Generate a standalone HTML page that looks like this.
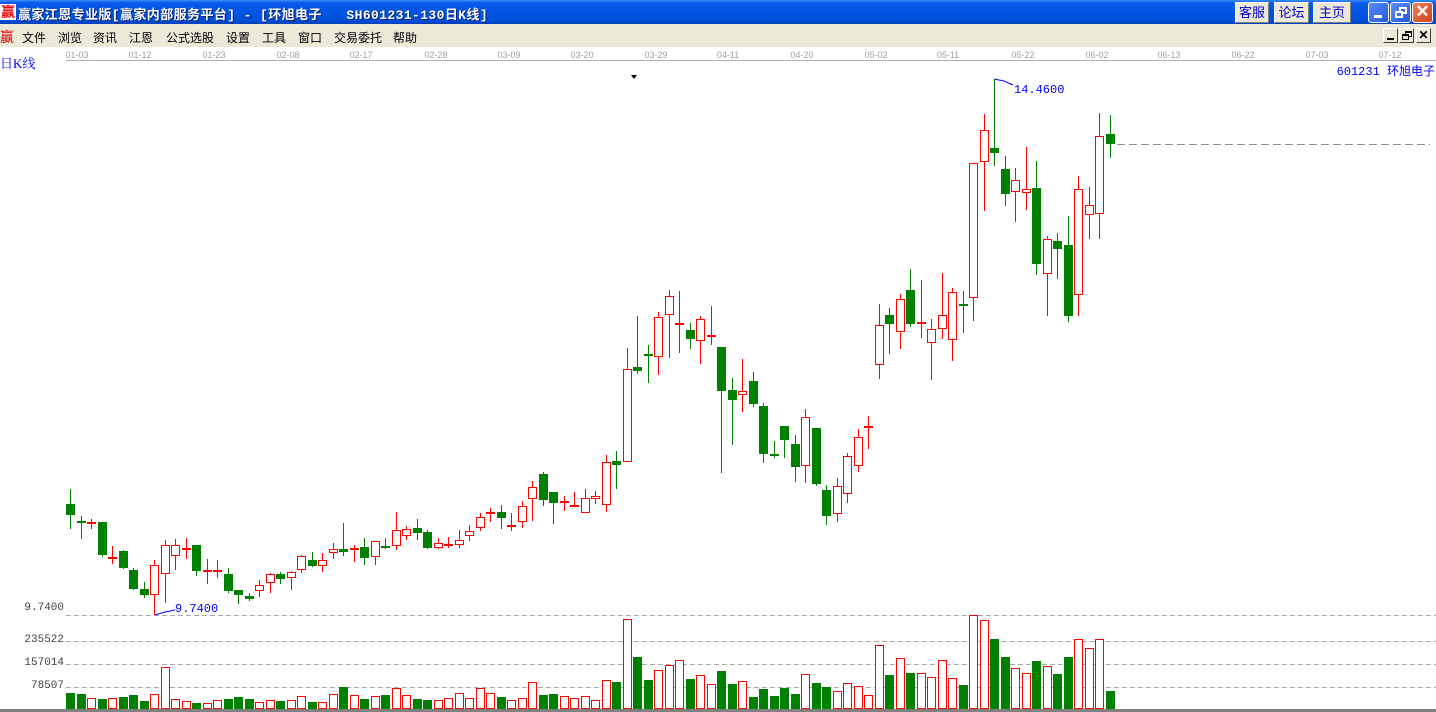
<!DOCTYPE html>
<html><head><meta charset="utf-8">
<style>
*{margin:0;padding:0;box-sizing:border-box}
body{width:1436px;height:712px;overflow:hidden;background:#fff;position:relative;font-family:"Liberation Sans","Noto Sans CJK SC",sans-serif}
#title{position:absolute;left:0;top:0;width:1436px;height:24px;background:linear-gradient(#3d8dfc 0%,#0a5ae8 12%,#0054e3 50%,#0050dc 85%,#003fb8 100%)}
#title .t{position:absolute;left:18px;top:4px;color:#fff;font-weight:bold;font-size:13px;letter-spacing:0.4px;white-space:pre;font-family:"Liberation Mono","WenQuanYi Zen Hei","Noto Sans CJK SC",monospace;text-shadow:1px 1px 0 #0a1e6a}
.ico{position:absolute;color:#e00;font-size:14px;font-weight:bold;background:#fff;line-height:16px;width:16px;height:16px;text-align:center}
.tb{position:absolute;top:2px;height:21px;background:#ece9d8;border:1px solid #fff;border-right-color:#808080;border-bottom-color:#808080;color:#00c;font-size:13px;text-align:center;line-height:19px}
.xb{position:absolute;top:2px;width:21px;height:21px;border:1px solid #fff;border-radius:3px;background:linear-gradient(135deg,#5a8dff,#2159e0);}
#menu{position:absolute;left:0;top:24px;width:1436px;height:23px;background:#ece9d8;font-size:12px;color:#000}
#menu span{position:absolute;top:5px}
.mb{position:absolute;top:4px;width:15px;height:15px;background:#ece9d8;border:1px solid #fff;border-right-color:#404040;border-bottom-color:#404040}
.d{position:absolute;top:50px;font-size:9px;color:#a0a0a0;transform:translateX(-50%);font-family:"Liberation Sans",sans-serif}
.lab{position:absolute;font-size:11px;color:#404040;font-family:"Liberation Mono",monospace;text-align:right;width:60px;left:4px}
</style></head><body>
<div id="title">
<div class="ico" style="left:0;top:4px;background:#fff">赢</div>
<div class="t">赢家江恩专业版[赢家内部服务平台] - [环旭电子   SH601231-130日K线]</div>
<div class="tb" style="left:1235px;width:34px">客服</div>
<div class="tb" style="left:1274px;width:35px">论坛</div>
<div class="tb" style="left:1313px;width:38px">主页</div>
<div class="xb" style="left:1368px"><div style="position:absolute;left:5px;top:12px;width:8px;height:3px;background:#fff"></div></div>
<div class="xb" style="left:1390px"><div style="position:absolute;left:8px;top:4px;width:8px;height:7px;border:2px solid #fff"></div><div style="position:absolute;left:4px;top:8px;width:8px;height:7px;border:2px solid #fff;background:#3a6ef0"></div></div>
<div class="xb" style="left:1412px;background:linear-gradient(135deg,#f08060,#d04020);color:#fff;font-size:17px;line-height:18px;text-align:center;font-weight:bold">✕</div>
</div>
<div id="menu">
<span style="left:0;top:3px;color:#d00;font-size:14px">赢</span>
<span style="left:22px">文件</span><span style="left:58px">浏览</span><span style="left:93px">资讯</span><span style="left:129px">江恩</span><span style="left:166px">公式选股</span><span style="left:226px">设置</span><span style="left:262px">工具</span><span style="left:298px">窗口</span><span style="left:334px">交易委托</span><span style="left:393px">帮助</span>
<div class="mb" style="left:1383px"><div style="position:absolute;left:3px;top:9px;width:7px;height:2px;background:#000"></div></div>
<div class="mb" style="left:1399px"><div style="position:absolute;left:5px;top:2px;width:7px;height:6px;border:1px solid #000;border-top-width:2px"></div><div style="position:absolute;left:2px;top:5px;width:7px;height:6px;border:1px solid #000;border-top-width:2px;background:#ece9d8"></div></div>
<div class="mb" style="left:1416px;font-size:12px;font-weight:bold;text-align:center;line-height:13px">✕</div>
</div>
<div style="position:absolute;left:66px;top:60px;width:1370px;height:1px;background:#b0b0b0"></div>
<div class="d" style="left:77px">01-03</div><div class="d" style="left:140px">01-12</div><div class="d" style="left:214px">01-23</div><div class="d" style="left:288px">02-08</div><div class="d" style="left:361px">02-17</div><div class="d" style="left:436px">02-28</div><div class="d" style="left:509px">03-09</div><div class="d" style="left:582px">03-20</div><div class="d" style="left:656px">03-29</div><div class="d" style="left:728px">04-11</div><div class="d" style="left:802px">04-20</div><div class="d" style="left:876px">05-02</div><div class="d" style="left:948px">05-11</div><div class="d" style="left:1023px">05-22</div><div class="d" style="left:1097px">06-02</div><div class="d" style="left:1169px">06-13</div><div class="d" style="left:1243px">06-22</div><div class="d" style="left:1317px">07-03</div><div class="d" style="left:1390px">07-12</div>
<div style="position:absolute;left:0;top:53px;color:#00f;font-size:13px;font-family:'Liberation Serif','Noto Serif CJK SC',serif">日K线</div>
<div style="position:absolute;right:1px;top:62px;color:#00f;font-size:12px;font-family:'Liberation Mono','Noto Sans CJK SC',monospace">601231 环旭电子</div>
<div style="position:absolute;left:1014px;top:83px;color:#00f;font-size:12px;font-family:'Liberation Mono',monospace">14.4600</div>
<div style="position:absolute;left:175px;top:602px;color:#00f;font-size:12px;font-family:'Liberation Mono',monospace">9.7400</div>
<div class="lab" style="top:602px">9.7400</div>
<div class="lab" style="top:634px">235522</div>
<div class="lab" style="top:657px">157014</div>
<div class="lab" style="top:680px">78507</div>
<svg id="c" width="1436" height="712" style="position:absolute;left:0;top:0" xmlns="http://www.w3.org/2000/svg">
<g stroke="#a8a8a8" stroke-dasharray="5,3" stroke-width="1">
<line x1="66" y1="615.5" x2="1436" y2="615.5"/><line x1="66" y1="641.5" x2="1436" y2="641.5"/><line x1="66" y1="664.5" x2="1436" y2="664.5"/><line x1="66" y1="687.5" x2="1436" y2="687.5"/>
</g>
<line x1="1117" y1="144.5" x2="1430" y2="144.5" stroke="#909090" stroke-dasharray="8,4"/>
<rect x="0" y="709" width="1436" height="3" fill="#808080"/>
<polygon points="631,75 637,75 634,79" fill="#000"/>
<polyline points="994,79 1004,81 1013,85" fill="none" stroke="#00f"/>
<polyline points="155,615 165,612 175,610" fill="none" stroke="#00f"/>
<g id="k"></g>
</svg>
<script>
var C=[
['g',504,515,489,529],['g',521,521,516,539],['r',522,522,519,529],['g',522,555,522,557],['r',557,557,546,564],['g',551,568,550,569],['g',570,589,568,590],['g',589,595,582,598],['r',565,595,560,615],['r',545,574,540,603],
['r',545,556,539,570],['r',548,548,538,559],['g',545,571,545,576],['r',570,570,559,584],['r',570,570,560,578],['g',574,591,568,593],['g',590,595,590,604],['g',596,599,593,601],['r',585,591,580,597],['r',574,583,573,593],
['g',574,579,572,584],['r',572,578,571,590],['r',556,570,555,573],['g',560,566,552,567],['r',560,566,553,572],['r',549,553,543,559],['g',549,552,523,556],['r',548,548,545,562],['g',547,558,538,565],['r',541,557,541,565],
['g',546,546,538,549],['r',530,546,512,550],['r',529,536,526,540],['g',528,533,519,540],['g',532,548,530,549],['r',543,548,538,549],['r',544,544,537,548],['r',540,545,530,548],['r',531,536,525,541],['r',517,528,513,531],
['r',512,512,508,522],['g',512,518,505,529],['r',525,525,513,531],['r',506,522,501,528],['r',487,499,481,521],['g',474,500,472,506],['g',492,503,492,524],['r',501,503,496,511],['r',505,505,492,507],['r',498,513,489,513],
['r',496,499,491,504],['r',462,505,455,512],['g',461,465,451,489],['r',369,462,348,462],['g',367,371,316,374],['g',354,354,345,383],['r',317,357,312,375],['r',296,315,290,358],['r',323,323,291,353],['g',330,339,323,349],
['r',319,341,316,364],['r',335,335,306,345],['g',347,391,347,473],['g',390,400,378,445],['r',391,395,359,412],['g',381,404,372,407],['g',406,454,403,463],['g',454,454,441,458],['g',426,440,426,458],['g',444,467,435,482],
['r',417,466,409,483],['g',428,484,428,486],['g',490,516,485,525],['r',486,514,478,522],['r',456,494,453,503],['r',437,466,429,472],['r',426,426,416,449],['r',325,365,304,379],['g',315,324,308,354],['r',299,332,294,349],
['g',290,324,269,327],['r',322,322,280,338],['r',329,343,319,380],['r',315,329,273,339],['r',292,340,288,361],['g',304,304,291,333],['r',163,298,163,321],['r',130,162,114,211],['g',148,153,79,166],['g',169,194,156,206],
['r',180,192,168,222],['r',189,193,147,210],['g',188,264,161,275],['r',239,274,236,316],['g',241,249,233,279],['g',245,316,216,322],['r',189,295,176,316],['r',205,215,187,239],['r',136,214,113,239],['g',134,144,115,158]];
var V="693g 694g 698r 699g 698r 697g 695g 701g 694r 667r 699r 701r 703g 703r 700r 699g 697g 699g 702r 700r 701g 700r 696r 702g 702r 694r 687g 695r 699g 696r 695g 688r 695r 699g 700g 700r 698r 693r 698r 688r 693r 697g 700r 698r 682r 695g 694g 696r 698r 696r 700r 680r 682g 619r 657g 680g 670r 665r 660r 679g 675r 684r 671g 684g 681r 697g 689g 696g 688g 694g 674r 683g 687g 691r 683r 686r 695r 645r 675g 658r 673g 673r 677r 660r 678r 685g 615r 620r 639g 657g 668r 673r 661g 666r 674g 657g 639r 648r 639r 691g".split(" ");
var s="";
for(var i=0;i<C.length;i++){
 var c=C[i],x=Math.round(70+i*10.505),col=c[0]=='r'?'#ff0000':'#008000';
 s+='<line x1="'+(x+0.5)+'" y1="'+c[3]+'" x2="'+(x+0.5)+'" y2="'+c[4]+'" stroke="'+col+'"/>';
 if(c[2]-c[1]<2){s+='<rect x="'+(x-4)+'" y="'+c[1]+'" width="9" height="2" fill="'+col+'"/>';}
 else if(c[0]=='r'){s+='<rect x="'+(x-3.5)+'" y="'+(c[1]+0.5)+'" width="8" height="'+(c[2]-c[1]-1)+'" fill="#fff" stroke="'+col+'"/>';}
 else{s+='<rect x="'+(x-4)+'" y="'+c[1]+'" width="9" height="'+(c[2]-c[1])+'" fill="'+col+'"/>';}
 var v=V[i],t=parseInt(v),vc=v.slice(-1);
 if(vc=='r'){s+='<rect x="'+(x-3.5)+'" y="'+(t+0.5)+'" width="8" height="'+(709-t-1)+'" fill="#fff" stroke="#ff0000"/>';}
 else{s+='<rect x="'+(x-4)+'" y="'+t+'" width="9" height="'+(709-t)+'" fill="#008000"/>';}
}
document.getElementById('k').innerHTML=s;
</script>
</body></html>
